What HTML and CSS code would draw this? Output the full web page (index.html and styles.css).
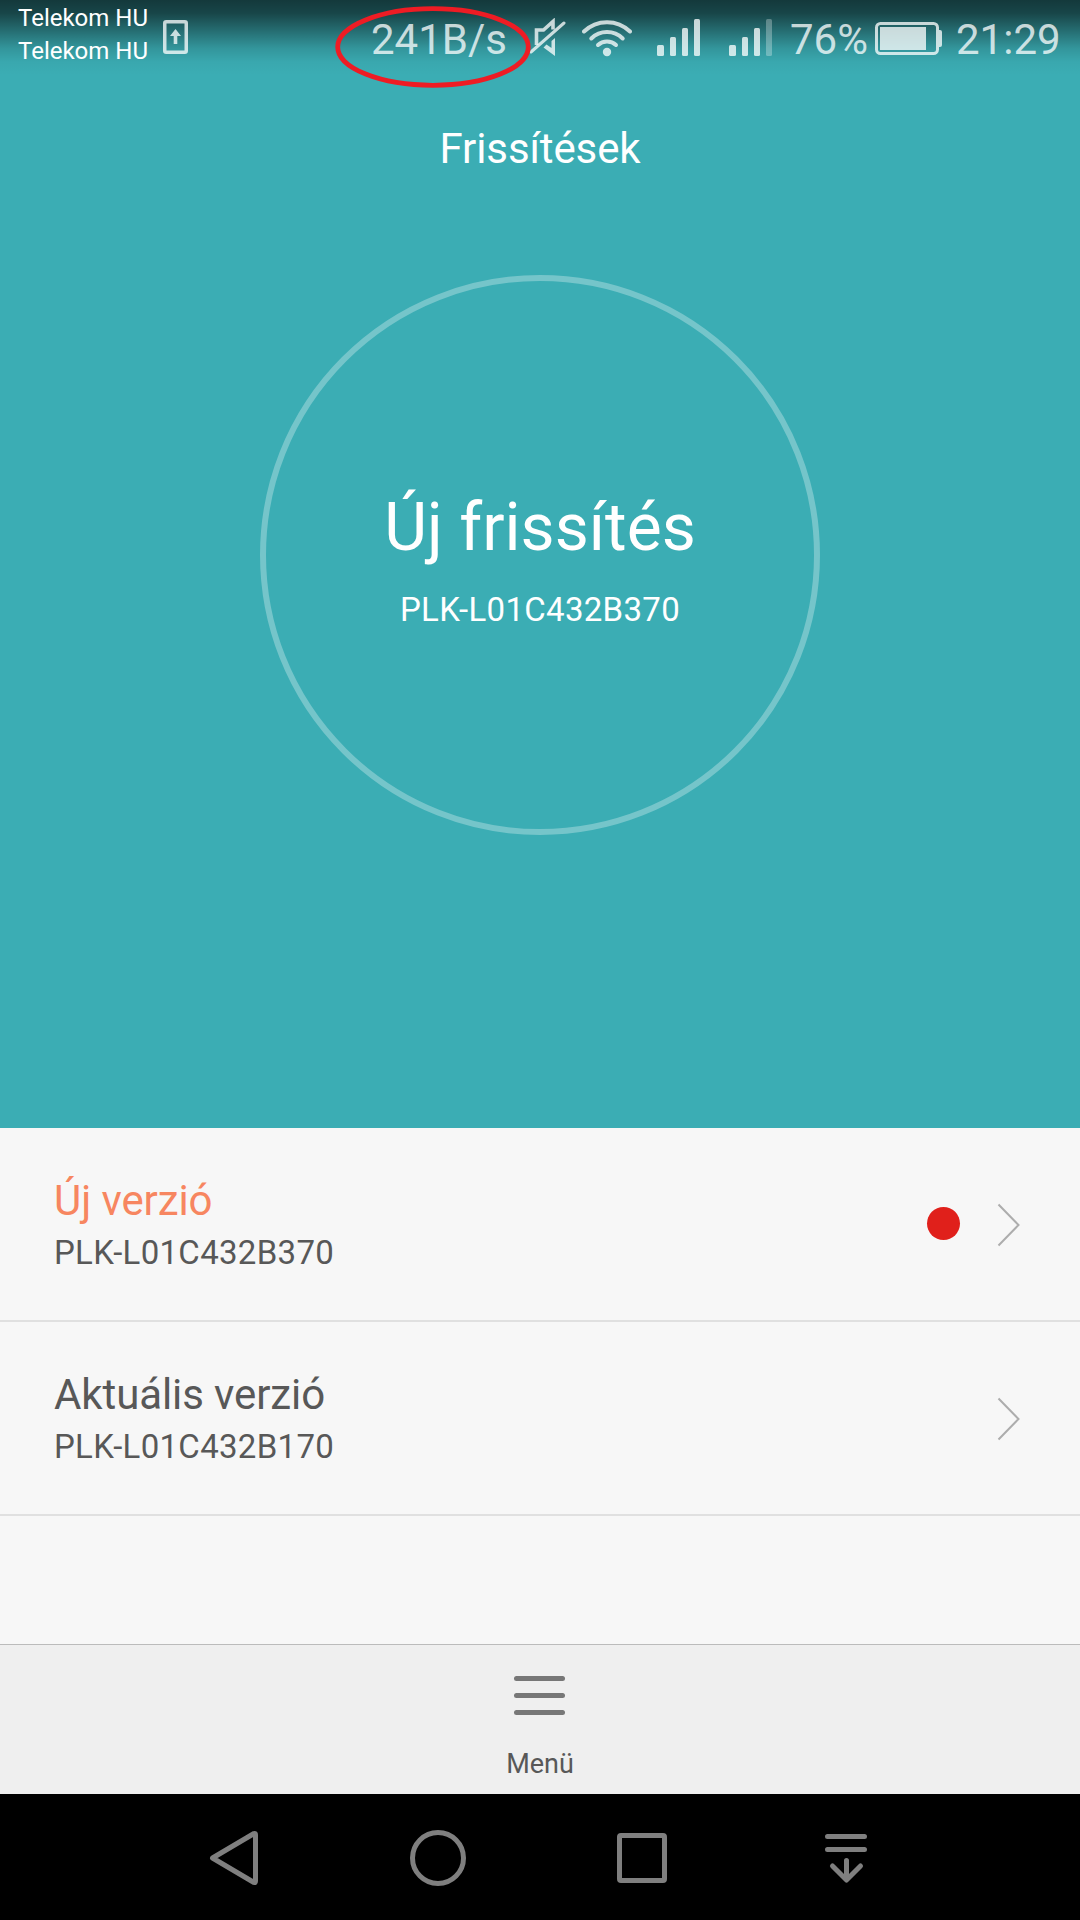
FILE: index.html
```html
<!DOCTYPE html>
<html lang="hu">
<head>
    <meta charset="UTF-8">
    <title>Frissítések</title>
    <link rel="stylesheet" href="styles.css">
</head>
<body>
    <header class="hero">
        <div class="status-bar">
            <div class="carriers">
                <span>Telekom HU</span>
                <span>Telekom HU</span>
            </div>
            <svg class="sim" width="25" height="34" viewBox="0 0 25 34">
                <rect x="1.75" y="1.75" width="21.5" height="30.5" rx="1.5" fill="none" stroke="currentColor" stroke-width="3.5"/>
                <path d="M12.5 9l5.5 7h-3.7v8h-3.6v-8H7z" fill="currentColor"/>
            </svg>
            <div class="speed-wrap">
                <span class="speed">241B/s</span>
                <svg class="marker" width="196" height="82" viewBox="0 0 196 82">
                    <ellipse cx="98" cy="41" rx="95.3" ry="38.3" fill="none" stroke="#ee1c24" stroke-width="4.8"/>
                </svg>
            </div>
            <svg class="mute" width="38" height="40" viewBox="0 0 38 40">
                <path d="M2 34L35 5" fill="none" stroke="currentColor" stroke-width="3" stroke-linecap="round"/>
                <path d="M7.5 27V12h7l9.5-8.5v8" fill="none" stroke="currentColor" stroke-width="3.6"/>
                <path d="M26 20v18L14.5 29.5l3-3L22.5 30V23z" fill="currentColor"/>
            </svg>
            <svg class="wifi" width="50" height="38" viewBox="0 0 50 38">
                <g fill="none" stroke="currentColor" stroke-width="4" stroke-linecap="round">
                    <path d="M2 12.5a33 33 0 0 1 46 0"/>
                    <path d="M9.3 19.5a22.5 22.5 0 0 1 31.4 0"/>
                    <path d="M16 26a13 13 0 0 1 18 0"/>
                </g>
                <circle cx="25" cy="33" r="4.2" fill="currentColor"/>
            </svg>
            <svg class="signal" width="43" height="37" viewBox="0 0 43 37" fill="currentColor">
                <rect x="0" y="26" width="7" height="11" rx="1.5"/>
                <rect x="13" y="18" width="6" height="19" rx="1.5"/>
                <rect x="25" y="9" width="6" height="28" rx="1.5"/>
                <rect x="37" y="0" width="6" height="37" rx="1.5"/>
            </svg>
            <svg class="signal second" width="43" height="37" viewBox="0 0 43 37" fill="currentColor">
                <rect x="0" y="26" width="7" height="11" rx="1.5"/>
                <rect x="13" y="18" width="6" height="19" rx="1.5"/>
                <rect x="25" y="9" width="6" height="28" rx="1.5"/>
                <rect x="37" y="0" width="6" height="37" rx="1.5" opacity=".38"/>
            </svg>
            <span class="percent">76%</span>
            <svg class="battery" width="67" height="33" viewBox="0 0 67 33">
                <rect x="1.5" y="1.5" width="61" height="30" rx="4" fill="none" stroke="currentColor" stroke-width="3"/>
                <rect x="5" y="5" width="46" height="23" fill="currentColor"/>
                <path d="M64 8h1q2 0 2 2v13q0 2-2 2h-1z" fill="currentColor"/>
            </svg>
            <span class="clock">21:29</span>
        </div>
        <h1 class="title">Frissítések</h1>
        <div class="ring">
            <div class="ring-title">Új frissítés</div>
            <div class="ring-version">PLK-L01C432B370</div>
        </div>
    </header>

    <main class="list">
        <div class="row">
            <div class="row-text">
                <div class="row-title new">Új verzió</div>
                <div class="row-version">PLK-L01C432B370</div>
            </div>
            <span class="dot"></span>
            <svg class="chevron" width="24" height="44" viewBox="0 0 24 44">
                <path d="M1.5 1.5l20 20.5L1.5 42.5" fill="none" stroke="currentColor" stroke-width="2"/>
            </svg>
        </div>
        <div class="row">
            <div class="row-text">
                <div class="row-title">Aktuális verzió</div>
                <div class="row-version">PLK-L01C432B170</div>
            </div>
            <svg class="chevron" width="24" height="44" viewBox="0 0 24 44">
                <path d="M1.5 1.5l20 20.5L1.5 42.5" fill="none" stroke="currentColor" stroke-width="2"/>
            </svg>
        </div>
    </main>

    <div class="menu-bar">
        <div class="burger">
            <span></span>
            <span></span>
            <span></span>
        </div>
        <div class="menu-label">Menü</div>
    </div>

    <nav class="nav-bar">
        <svg width="60" height="60" viewBox="0 0 60 60">
            <path d="M8.5 30L50 5.5Q51.5 5 51.5 7V53Q51.5 55 50 54.5z"/>
        </svg>
        <svg width="60" height="60" viewBox="0 0 60 60">
            <circle cx="30" cy="30" r="25.5"/>
        </svg>
        <svg width="60" height="60" viewBox="0 0 60 60">
            <rect x="7.5" y="7.5" width="45" height="45" rx="1.5"/>
        </svg>
        <svg width="60" height="60" viewBox="0 0 60 60">
            <path d="M11.5 8.5h37M11.5 21.5h37M30.5 32.5v19M16.5 38l14 14 14-14"/>
        </svg>
    </nav>
</body>
</html>
```

FILE: styles.css
```css
* {
    box-sizing: border-box;
}
body {
    margin: 0;
    width: 1080px;
    height: 1920px;
    display: flex;
    flex-direction: column;
    overflow: hidden;
    font-family: Roboto, sans-serif;
    background-color: #f7f7f7;
    color: #585858;
}
svg {
    display: block;
    flex-shrink: 0;
}

/* header */
.hero {
    height: 1128px;
    display: flex;
    flex-direction: column;
    align-items: center;
    background-color: #3badb4;
    color: white;
}
.status-bar {
    width: 100%;
    height: 75px;
    padding: 0 18px;
    display: flex;
    align-items: flex-start;
    color: rgba(255, 255, 255, 0.76);
    font-size: 42px;
    line-height: 50px;
    background: linear-gradient(rgba(0, 0, 0, 0.67) 0, rgba(0, 0, 0, 0.6) 13px, rgba(0, 0, 0, 0.38) 30px, rgba(0, 0, 0, 0.14) 48px, rgba(0, 0, 0, 0.03) 62px, transparent 75px);
}
.carriers {
    width: 145px;
    padding-top: 2px;
    display: flex;
    flex-direction: column;
    flex-shrink: 0;
    color: white;
    font-size: 24px;
    line-height: 33px;
    white-space: nowrap;
}
.sim {
    margin-top: 20px;
}
.speed-wrap {
    position: relative;
    width: 157px;
    margin: 15px 0 0 183px;
}
.marker {
    position: absolute;
    left: -36px;
    top: -9px;
}
.mute {
    margin: 18px 0 0 1px;
}
.wifi {
    margin: 19px 0 0 15px;
}
.signal {
    margin: 19px 0 0 25px;
}
.signal.second {
    margin-left: 29px;
}
.percent {
    width: 85px;
    margin: 15px 0 0 18px;
}
.battery {
    margin-top: 22px;
}
.clock {
    margin: 15px 0 0 14px;
}
.title {
    margin: 49px 0 0;
    font-size: 42px;
    font-weight: 400;
    line-height: 50px;
    letter-spacing: -0.1px;
}
.ring {
    width: 560px;
    height: 560px;
    margin-top: 101px;
    padding-top: 207px;
    border: 6px solid #75c5ca;
    border-radius: 50%;
    text-align: center;
}
.ring-title {
    font-size: 66px;
    line-height: 80px;
}
.ring-version {
    margin-top: 22px;
    font-size: 33px;
    line-height: 40px;
    letter-spacing: 0.3px;
}

/* version list */
.list {
    flex: 1;
}
.row {
    height: 194px;
    padding: 0 59px 0 54px;
    display: flex;
    align-items: center;
    border-bottom: 2px solid #e0e0e0;
}
.row-text {
    flex: 1;
    padding-top: 7px;
}
.row-title {
    font-size: 42px;
    line-height: 51px;
    letter-spacing: -0.1px;
}
.row-title.new {
    color: #f78660;
}
.row-version {
    font-size: 33px;
    line-height: 54px;
    letter-spacing: 0.3px;
}
.dot {
    width: 33px;
    height: 33px;
    margin: 0 37px 2px 0;
    border-radius: 50%;
    background-color: #e0201b;
}
.chevron {
    margin-top: 1px;
    color: #adadad;
}

/* bottom menu */
.menu-bar {
    height: 150px;
    padding-top: 31px;
    display: flex;
    flex-direction: column;
    align-items: center;
    border-top: 1px solid #bbb;
    background-color: #efefef;
}
.burger {
    display: flex;
    flex-direction: column;
    gap: 12px;
    margin-right: 1px;
}
.burger span {
    width: 51px;
    height: 5px;
    border-radius: 3px;
    background-color: #777;
}
.menu-label {
    margin-top: 33px;
    font-size: 27px;
    line-height: 32px;
}

/* system navigation */
.nav-bar {
    height: 126px;
    padding: 2px 132px 0;
    display: flex;
    align-items: center;
    justify-content: space-around;
    background-color: black;
}
.nav-bar svg {
    fill: none;
    stroke: #7f7f7f;
    stroke-width: 5;
    stroke-linecap: round;
    stroke-linejoin: round;
}
```
